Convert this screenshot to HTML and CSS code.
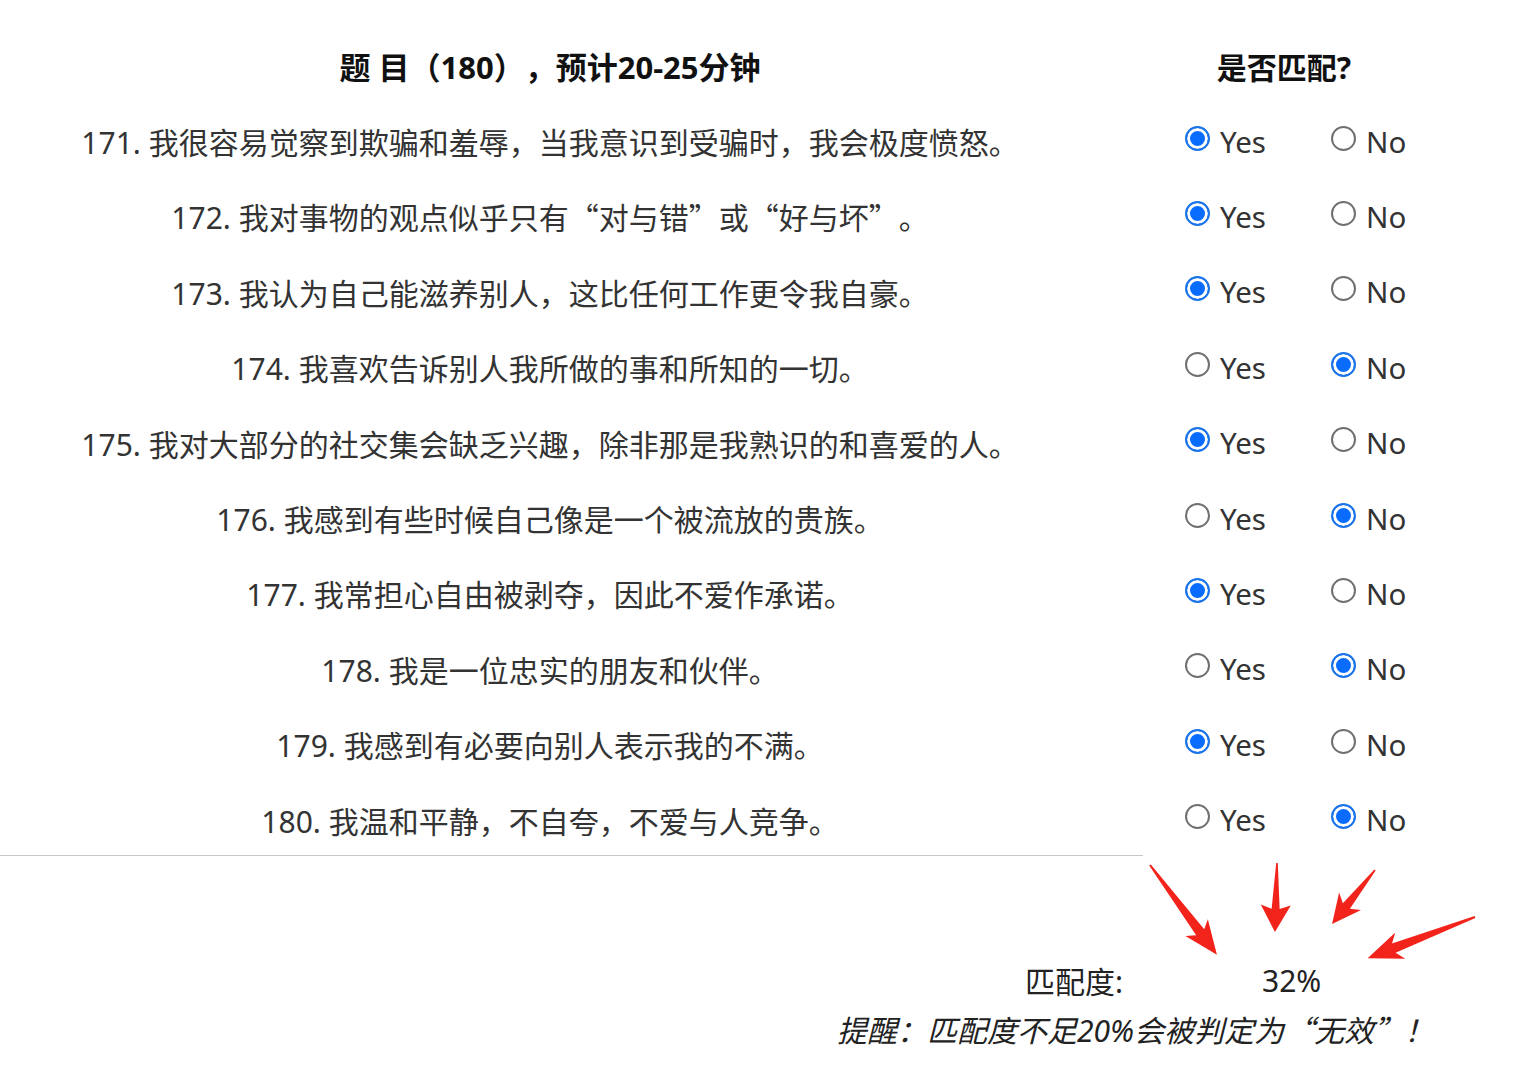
FILE: index.html
```html
<!DOCTYPE html>
<html lang="zh-CN">
<head>
<meta charset="utf-8">
<title>题目</title>
<link rel="stylesheet" href="styles.css">
</head>
<body>
<div class="page">
  <div class="quiz">
    <div class="head-q">题 目（180），预计20-25分钟</div>
    <div class="head-a">是否匹配?</div>

    <div class="q">171. 我很容易觉察到欺骗和羞辱，当我意识到受骗时，我会极度愤怒。</div>
    <div class="a"><label class="opt yes"><input type="radio" name="q171" checked>Yes</label><label class="opt"><input type="radio" name="q171">No</label></div>

    <div class="q">172. 我对事物的观点似乎只有<span class="cq">“</span>对与错<span class="cq">”</span>或<span class="cq">“</span>好与坏<span class="cq">”</span>。</div>
    <div class="a"><label class="opt yes"><input type="radio" name="q172" checked>Yes</label><label class="opt"><input type="radio" name="q172">No</label></div>

    <div class="q">173. 我认为自己能滋养别人，这比任何工作更令我自豪。</div>
    <div class="a"><label class="opt yes"><input type="radio" name="q173" checked>Yes</label><label class="opt"><input type="radio" name="q173">No</label></div>

    <div class="q">174. 我喜欢告诉别人我所做的事和所知的一切。</div>
    <div class="a"><label class="opt yes"><input type="radio" name="q174">Yes</label><label class="opt"><input type="radio" name="q174" checked>No</label></div>

    <div class="q">175. 我对大部分的社交集会缺乏兴趣，除非那是我熟识的和喜爱的人。</div>
    <div class="a"><label class="opt yes"><input type="radio" name="q175" checked>Yes</label><label class="opt"><input type="radio" name="q175">No</label></div>

    <div class="q">176. 我感到有些时候自己像是一个被流放的贵族。</div>
    <div class="a"><label class="opt yes"><input type="radio" name="q176">Yes</label><label class="opt"><input type="radio" name="q176" checked>No</label></div>

    <div class="q">177. 我常担心自由被剥夺，因此不爱作承诺。</div>
    <div class="a"><label class="opt yes"><input type="radio" name="q177" checked>Yes</label><label class="opt"><input type="radio" name="q177">No</label></div>

    <div class="q">178. 我是一位忠实的朋友和伙伴。</div>
    <div class="a"><label class="opt yes"><input type="radio" name="q178">Yes</label><label class="opt"><input type="radio" name="q178" checked>No</label></div>

    <div class="q">179. 我感到有必要向别人表示我的不满。</div>
    <div class="a"><label class="opt yes"><input type="radio" name="q179" checked>Yes</label><label class="opt"><input type="radio" name="q179">No</label></div>

    <div class="q">180. 我温和平静，不自夸，不爱与人竞争。</div>
    <div class="a"><label class="opt yes"><input type="radio" name="q180">Yes</label><label class="opt"><input type="radio" name="q180" checked>No</label></div>
  </div>
  <div class="divider"></div>

  <div class="result">
    <div class="score"><span class="score-label">匹配度:</span><span class="score-value">32%</span></div>
    <div class="note">提醒：匹配度不足20%会被判定为<span class="cq">“</span>无效<span class="cq">”</span>！</div>
  </div>

  <svg class="arrows" width="1536" height="1077" viewBox="0 0 1536 1077" aria-hidden="true">
    <g fill="#f2231a">
      <polygon transform="translate(1150 865) rotate(53.3)" points="0,-1 84,-5 78,-14 112,0 78,14 84,5 0,1"/>
      <polygon transform="translate(1277 863) rotate(91.7)" points="0,-0.8 46,-4 42,-15 69,0 42,15 46,4 0,0.8"/>
      <polygon transform="translate(1375 870) rotate(128.5)" points="0,-0.8 46,-4.5 40,-14 69,0 40,14 46,4.5 0,0.8"/>
      <polygon transform="translate(1475 917) rotate(159)" points="0,-1 87,-5 80,-14 115,0 80,14 87,5 0,1"/>
    </g>
  </svg>
</div>
</body>
</html>
```

FILE: styles.css
```css
html, body {
  margin: 0;
  padding: 0;
  background: #fff;
}

body {
  font-family: "Noto Sans", "Noto Sans CJK SC", sans-serif;
  color: #333;
  text-spacing-trim: space-all;
}

.page {
  position: relative;
  width: 1536px;
  height: 1077px;
  overflow: hidden;
}

.cq {
  font-family: "Noto Sans CJK SC", sans-serif;
}

.quiz {
  display: grid;
  grid-template-columns: 1100px 380px;
  grid-auto-rows: 75.4px;
  padding-top: 28px;
}

.head-q,
.head-a {
  display: flex;
  align-items: center;
  justify-content: center;
  font-size: 31px;
  font-weight: 700;
  color: #111;
}

.head-a {
  font-size: 30px;
  padding-right: 12px;
}

.q {
  display: flex;
  align-items: center;
  justify-content: center;
  font-size: 30px;
  color: #333;
  white-space: nowrap;
}

.a {
  display: flex;
  align-items: center;
  padding-left: 85px;
  font-size: 29.5px;
}

.opt {
  display: inline-flex;
  align-items: center;
  gap: 10px;
  color: #333;
}

.opt.yes {
  width: 146px;
}

.opt input {
  appearance: none;
  -webkit-appearance: none;
  margin: 0;
  width: 25px;
  height: 25px;
  border-radius: 50%;
  border: 2px solid #707070;
  background: #fff;
  box-sizing: border-box;
  position: relative;
  top: -3px;
}

.opt input:checked {
  border: 2px solid #1a73e8;
  background: #0a6cff;
  box-shadow: inset 0 0 0 3px #fff;
}

.divider {
  width: 1143px;
  height: 0;
  border-top: 1.5px solid #c8c8c8;
  margin-top: -2px;
}

.result {
  padding-top: 100px;
}

.score {
  display: flex;
  align-items: center;
  padding-left: 1025px;
  font-size: 30px;
  color: #222;
  height: 48px;
}

.score-label {
  width: 237px;
}

.note {
  padding-left: 837px;
  font-size: 30px;
  font-style: italic;
  color: #222;
  height: 50px;
  display: flex;
  align-items: center;
}

.arrows {
  position: absolute;
  left: 0;
  top: 0;
  pointer-events: none;
}
```
